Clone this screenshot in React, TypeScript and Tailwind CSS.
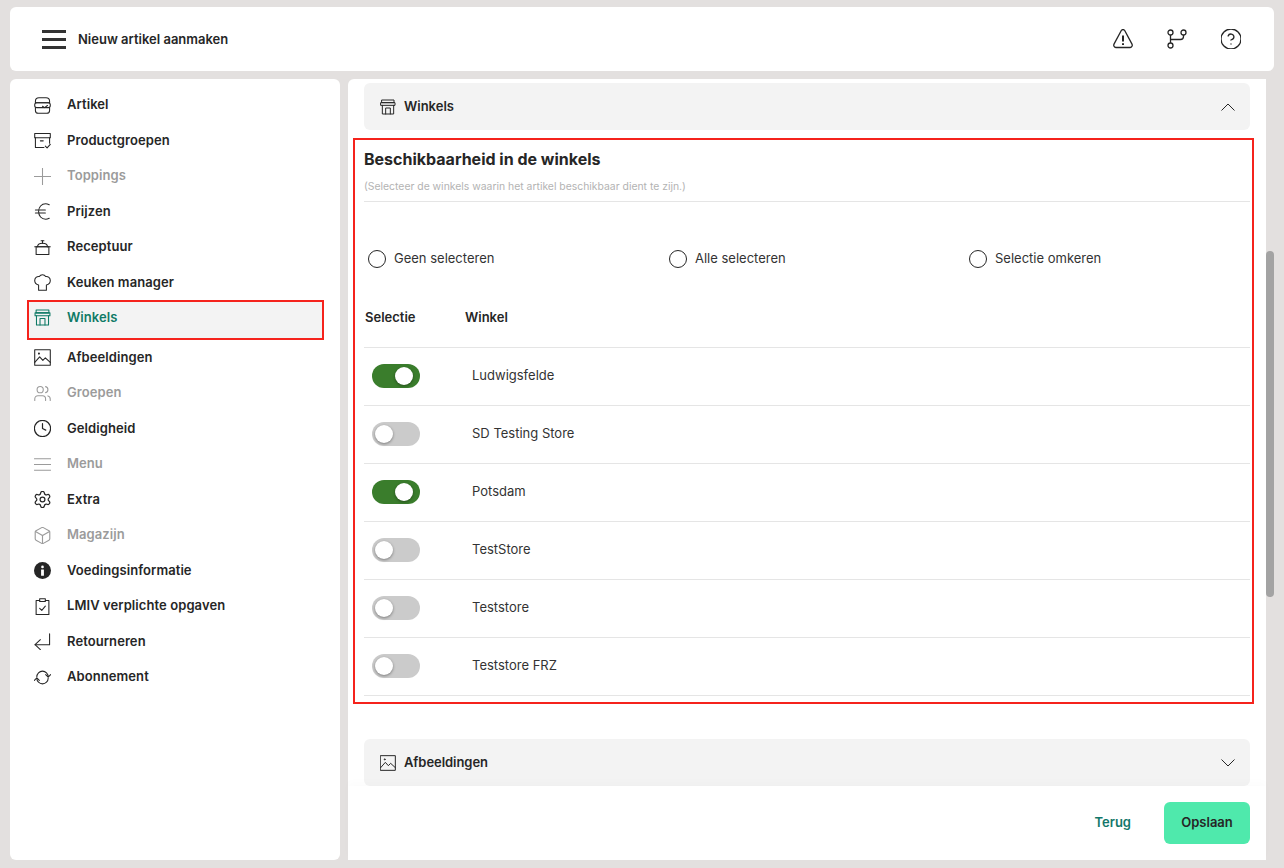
import { Clock, Settings, Box, Users, CircleHelp } from 'lucide-react';
import type { ReactNode } from 'react';

function Icon({ children, className = '' }: { children: ReactNode; className?: string }) {
  return (
    <svg viewBox="0 0 24 24" fill="none" stroke="currentColor" strokeWidth={1.5} strokeLinecap="round" strokeLinejoin="round" className={className}>
      {children}
    </svg>
  );
}

const StoreIcon = ({ className = '' }: { className?: string }) => (
  <Icon className={className}>
    <path d="M3 1.500h18v4H3z" />
    <path d="M1.500 5.500h21v4h-21z" />
    <path d="M3.500 9.500v13h17v-13" />
    <path d="M8.500 22.500v-9h7v9" />
  </Icon>
);

const ImageIcon = ({ className = '' }: { className?: string }) => (
  <Icon className={className}>
    <rect x="1" y="1" width="22" height="22" />
    <path d="M1 19l7-8 4.500 5 3.500-3.500 7 6.500" />
    <circle cx="7" cy="6.500" r="0.700" />
  </Icon>
);

const BurgerIcon = () => (
  <Icon className="w-full h-full">
    <path d="M2 8V6c0-3 2-5 5-5h10c3 0 5 2 5 5v2z" />
    <rect x="1" y="8" width="22" height="7" rx="3" />
    <path d="M2 15v4c0 2.500 2 4 4 4h12c2 0 4-1.500 4-4v-4" />
    <path d="M12 13l3 2 4-3" />
  </Icon>
);

const ArchiveCheckIcon = () => (
  <Icon className="w-full h-full">
    <path d="M1 2h22v6H1z" />
    <path d="M2 8v14h12" />
    <path d="M22 8v8" />
    <path d="M9 12.500h4" />
    <path d="M16 20l2.500 2.500 4.500-5" />
  </Icon>
);

const PotIcon = () => (
  <Icon className="w-full h-full">
    <path d="M3 11h18v11H3z" />
    <path d="M1 11h22" />
    <path d="M5 11c0-3 3-5 7-5s7 2 7 5" />
    <path d="M12 6V2.500" />
    <path d="M10 2.500h4" />
  </Icon>
);

const ChefIcon = () => (
  <Icon className="w-full h-full">
    <path d="M6.500 23h11v-7.500c3-.8 5.500-3 5.500-6.500 0-3.500-3-6-6.500-5.500C15.500 1.800 13.800 1 12 1s-3.500.8-4.500 2.500C4 3 1 5.500 1 9c0 3.500 2.500 5.700 5.500 6.500z" />
  </Icon>
);

const EuroIcon = () => (
  <Icon className="w-full h-full">
    <path d="M21.500 2.500C19.500 1.500 18 1 16.500 1 10.500 1 6.500 6 6.500 12s4 11 10 11c1.500 0 3-.5 5-1.500" />
    <path d="M2 10h14" />
    <path d="M2 14h14" />
  </Icon>
);

const PlusIcon = () => (
  <Icon className="w-full h-full">
    <path d="M12 0.500v23" />
    <path d="M0.500 12h23" />
  </Icon>
);

const MenuLinesIcon = () => (
  <Icon className="w-full h-full">
    <path d="M0.500 4h23" />
    <path d="M0.500 12h23" />
    <path d="M0.500 20h23" />
  </Icon>
);

const ClipboardIcon = () => (
  <Icon className="w-full h-full">
    <path d="M8 3.500H3v20h18v-20h-5" />
    <rect x="8" y="1" width="8" height="4" />
    <path d="M8 14.500l3 3 5-6" />
  </Icon>
);

const ReturnIcon = () => (
  <Icon className="w-full h-full">
    <path d="M22 1v15.500H1.500" />
    <path d="M9 9.500l-7.500 7 7.500 7" />
  </Icon>
);

const SyncIcon = () => (
  <Icon className="w-full h-full">
    <path d="M4 11A8 8 0 0 1 20 11" />
    <path d="M16.500 8l3.500 3.500L23.500 8" />
    <path d="M20 13A8 8 0 0 1 4 13" />
    <path d="M0.500 16L4 12.500 7.500 16" />
  </Icon>
);

const InfoFilled = () => (
  <svg viewBox="0 0 24 24" className="w-full h-full">
    <circle cx="12" cy="12" r="12" fill="currentColor" />
    <circle cx="12" cy="7" r="1.900" fill="#fff" />
    <rect x="10" y="10.500" width="4" height="9" rx="0.600" fill="#fff" />
  </svg>
);

const BranchIcon = () => (
  <svg viewBox="0 0 20 20" fill="none" stroke="currentColor" strokeWidth={1.3} className="w-[20px] h-[20px]">
    <circle cx="3.500" cy="3.500" r="2.500" />
    <circle cx="3.500" cy="16.500" r="2.500" />
    <circle cx="16.500" cy="3.500" r="2.500" />
    <path d="M3.500 6v8" />
    <path d="M16.500 6v1.500a3 3 0 0 1-3 3H3.500" />
  </svg>
);

const WarningIcon = () => (
  <svg viewBox="0 0 20 20" fill="none" stroke="currentColor" strokeWidth={1.3} strokeLinejoin="round" className="w-[20px] h-[20px]">
    <path d="M8.300 1.500a2 2 0 0 1 3.400 0l7.300 13.600c.7 1.400-.2 3.400-1.800 3.400H2.800c-1.600 0-2.500-2-1.800-3.400z" />
    <path d="M10 6.500v6" strokeWidth={2} />
    <path d="M10 14.300v1.800" strokeWidth={2} />
  </svg>
);

const Chevron = ({ up }: { up?: boolean }) => (
  <svg viewBox="0 0 14 8" fill="none" stroke="currentColor" strokeWidth={1} className="w-[14px] h-[8px]">
    <path d={up ? 'M0.500 7.500L7 1l6.500 6.500' : 'M0.500 0.500L7 7l6.500-6.500'} />
  </svg>
);

type NavItem = { label: string; icon: ReactNode; muted?: boolean; active?: boolean; h: string };

const lucideCls = 'w-full h-full';

const navItems: NavItem[] = [
  { label: 'Artikel', icon: <BurgerIcon />, h: 'h-[36px]' },
  { label: 'Productgroepen', icon: <ArchiveCheckIcon />, h: 'h-[35px]' },
  { label: 'Toppings', icon: <PlusIcon />, muted: true, h: 'h-[36px]' },
  { label: 'Prijzen', icon: <EuroIcon />, h: 'h-[35px]' },
  { label: 'Receptuur', icon: <PotIcon />, h: 'h-[36px]' },
  { label: 'Keuken manager', icon: <ChefIcon />, h: 'h-[35px]' },
  { label: 'Winkels', icon: <StoreIcon className={lucideCls} />, active: true, h: 'h-[40px]' },
  { label: 'Afbeeldingen', icon: <ImageIcon className={lucideCls} />, h: 'h-[35px]' },
  { label: 'Groepen', icon: <Users viewBox="1 2 22 20" className={lucideCls} strokeWidth={1.4} />, muted: true, h: 'h-[36px]' },
  { label: 'Geldigheid', icon: <Clock viewBox="1.500 1.500 21 21" className={lucideCls} strokeWidth={1.5} />, h: 'h-[35px]' },
  { label: 'Menu', icon: <MenuLinesIcon />, muted: true, h: 'h-[36px]' },
  { label: 'Extra', icon: <Settings viewBox="1.500 1.500 21 21" className={lucideCls} strokeWidth={1.5} />, h: 'h-[35px]' },
  { label: 'Magazijn', icon: <Box viewBox="1.500 1.500 21 21" className={lucideCls} strokeWidth={1.4} />, muted: true, h: 'h-[36px]' },
  { label: 'Voedingsinformatie', icon: <InfoFilled />, h: 'h-[35px]' },
  { label: 'LMIV verplichte opgaven', icon: <ClipboardIcon />, h: 'h-[36px]' },
  { label: 'Retourneren', icon: <ReturnIcon />, h: 'h-[35px]' },
  { label: 'Abonnement', icon: <SyncIcon />, h: 'h-[36px]' },
];

const stores = [
  { name: 'Ludwigsfelde', on: true },
  { name: 'SD Testing Store', on: false },
  { name: 'Potsdam', on: true },
  { name: 'TestStore', on: false },
  { name: 'Teststore', on: false },
  { name: 'Teststore FRZ', on: false },
];

function Toggle({ on }: { on: boolean }) {
  return (
    <div className={`relative w-[48px] h-[24px] rounded-full ${on ? 'bg-[#3a7d2c]' : 'bg-[#cbcbcb]'}`}>
      <div
        className={`absolute top-[3px] w-[18px] h-[18px] rounded-full bg-white shadow-[0_1px_3px_rgba(0,0,0,0.4)] ${on ? 'left-[23px]' : 'left-[3px]'}`}
      />
    </div>
  );
}

function Radio({ label }: { label: string }) {
  return (
    <div className="flex items-center gap-[8px] ml-[4px]">
      <div className="w-[18px] h-[18px] rounded-full border border-[#262626] bg-white" />
      <span className="text-[13px] text-[#333]">{label}</span>
    </div>
  );
}

export default function App() {
  return (
    <div className="w-[1284px] h-[868px] bg-[#e3e0df] flex flex-col gap-[8px] px-[10px] pt-[7px] pb-[8px] overflow-hidden font-['Inter',sans-serif] text-[#262626]">
      {/* Header */}
      <header className="h-[64px] shrink-0 bg-white rounded-[6px] flex items-center justify-between pl-[32px] pr-[33px]">
        <div className="flex items-center gap-[12px]">
          <div className="w-[24px] flex flex-col gap-[5px]">
            <div className="h-[3px] bg-[#333]" />
            <div className="h-[3px] bg-[#333]" />
            <div className="h-[3px] bg-[#333]" />
          </div>
          <span className="mt-[2px] text-[13px] font-semibold">Nieuw artikel aanmaken</span>
        </div>
        <div className="flex items-center gap-[34px]">
          <WarningIcon />
          <BranchIcon />
          <CircleHelp viewBox="2 2 20 20" className="w-[20px] h-[20px]" strokeWidth={1.3} />
        </div>
      </header>

      <div className="flex-1 min-h-0 flex gap-[8px]">
        {/* Sidebar */}
        <aside className="w-[330px] shrink-0 bg-white rounded-[6px] pt-[8px] pl-[17px] pr-[16px]">
          {navItems.map((item) => (
            <div
              key={item.label}
              className={`flex items-center gap-[16px] ${item.h} ${item.active ? 'bg-[#f3f3f3] border-2 border-[#f5231c] pl-[5px] pb-[5px] text-[#0f7a66]' : 'pl-[7px]'} ${item.muted ? 'text-[#9b9b9b]' : ''}`}
            >
              <span className="w-[17px] h-[17px] shrink-0">{item.icon}</span>
              <span className="text-[13px] font-semibold tracking-[0.08px]">{item.label}</span>
            </div>
          ))}
        </aside>

        {/* Main */}
        <main className="flex-1 min-w-0 flex">
          <div className="flex-1 min-w-0 bg-white flex flex-col rounded-l-[6px]">
            <div className="flex-1 min-h-0 overflow-hidden px-[16px] pt-[4px]">
              <div className="h-[47px] bg-[#f3f3f3] rounded-[6px] flex items-center justify-between pl-[16px] pr-[15px]">
                <div className="flex items-center gap-[8px]">
                  <StoreIcon className="w-[16px] h-[16px]" />
                  <span className="text-[13px] font-semibold">Winkels</span>
                </div>
                <Chevron up />
              </div>

              <section className="mt-[8px] -ml-[11px] -mr-[4px] border-2 border-[#f5231c] h-[566px] pl-[9px] pr-[2px]">
                <h2 className="mt-[7px] text-[16px] leading-[24px] font-bold">Beschikbaarheid in de winkels</h2>
                <p className="mt-[9px] text-[10.400px] leading-[14px] text-[#b3b3b3]">(Selecteer de winkels waarin het artikel beschikbaar dient te zijn.)</p>
                <div className="mt-[7px] h-px bg-[#e5e5e5]" />

                <div className="mt-[47px] grid grid-cols-[301px_300px_1fr] h-[18px]">
                  <Radio label="Geen selecteren" />
                  <Radio label="Alle selecteren" />
                  <Radio label="Selectie omkeren" />
                </div>

                <div className="mt-[42px] h-[18px] flex items-center text-[13px] font-semibold pl-px">
                  <span className="w-[100px]">Selectie</span>
                  <span>Winkel</span>
                </div>
                <div className="mt-[20px] h-px bg-[#e5e5e5]" />

                {stores.map((store) => (
                  <div key={store.name} className="h-[58px] border-b border-[#e5e5e5] flex items-center pb-px">
                    <div className="w-[108px] pl-[8px]">
                      <Toggle on={store.on} />
                    </div>
                    <span className="text-[13px] text-[#333]">{store.name}</span>
                  </div>
                ))}
              </section>

              <div className="mt-[35px] h-[47px] bg-[#f3f3f3] rounded-[6px] flex items-center justify-between pl-[16px] pr-[15px]">
                <div className="flex items-center gap-[8px]">
                  <ImageIcon className="w-[16px] h-[16px]" />
                  <span className="text-[13px] font-semibold tracking-[-0.05px]">Afbeeldingen</span>
                </div>
                <Chevron />
              </div>
            </div>

            {/* Footer */}
            <footer className="relative h-[74px] shrink-0 bg-white flex items-center justify-end gap-[33px] pr-[16px] pb-[1px] shadow-[0_-4px_8px_rgba(0,0,0,0.015)]">
              <span className="pt-px text-[13px] font-semibold text-[#12776a]">Terug</span>
              <button className="w-[86px] h-[42px] pt-px bg-[#4fe9ac] rounded-[6px] text-[13px] font-semibold text-[#262626]">Opslaan</button>
            </footer>
          </div>

          {/* Scrollbar */}
          <div className="w-[8px] shrink-0 flex flex-col pt-[172px] pb-[263px]">
            <div className="flex-1 bg-[#a3a3a3] rounded-full" />
          </div>
        </main>
      </div>
    </div>
  );
}
